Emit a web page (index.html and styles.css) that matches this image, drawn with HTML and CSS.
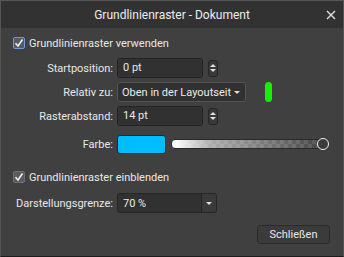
FILE: index.html
```html
<!DOCTYPE html>
<html>
<head>
<meta charset="utf-8">
<title>Grundlinienraster - Dokument</title>
<link rel="stylesheet" href="styles.css">
</head>
<body>
<div class="window">
    <!-- Title bar -->
    <div class="titlebar">
        <span></span>
        <span class="title">Grundlinienraster - Dokument</span>
        <span class="close">
            <svg width="10" height="10" viewBox="0 0 10 10"><path d="M1 1L9 9M9 1L1 9" stroke="#e0e0e0" stroke-width="1.4"/></svg>
        </span>
    </div>

    <!-- Content -->
    <div class="content">
        <div class="check-row first">
            <span class="checkbox focused"><svg width="10" height="10" viewBox="0 0 10 10"><path d="M1.5 5.2L4 8L8.5 1.5" fill="none" stroke="#f0f0f0" stroke-width="1.6"/></svg></span>
            <span>Grundlinienraster verwenden</span>
        </div>

        <div class="row r-start">
            <span class="label">Startposition:</span>
            <span class="input">0 pt</span>
            <span class="spinner"><i class="up"></i><i class="down"></i></span>
        </div>
        <div class="row">
            <span class="label">Relativ zu:</span>
            <span class="select wide"><span class="select-text">Oben in der Layoutseite</span><i class="arrow"></i></span>
            <span class="pill"></span>
        </div>
        <div class="row">
            <span class="label">Rasterabstand:</span>
            <span class="input">14 pt</span>
            <span class="spinner"><i class="up"></i><i class="down"></i></span>
        </div>
        <div class="row r-color">
            <span class="label">Farbe:</span>
            <span class="swatch"></span>
            <span class="slider"><span class="track"></span><span class="knob"></span></span>
        </div>

        <div class="check-row second">
            <span class="checkbox"><svg width="10" height="10" viewBox="0 0 10 10"><path d="M1.5 5.2L4 8L8.5 1.5" fill="none" stroke="#f0f0f0" stroke-width="1.6"/></svg></span>
            <span>Grundlinienraster einblenden</span>
        </div>

        <div class="row r-limit">
            <span class="label">Darstellungsgrenze:</span>
            <span class="select combo"><span class="select-text">70 %</span><span class="combo-btn"><i class="arrow"></i></span></span>
        </div>

        <div class="footer">
            <span class="btn">Schließen</span>
        </div>
    </div>
</div>
</body>
</html>
```

FILE: styles.css
```css
body {
    margin: 0px;
    background: #404040;
    font-family: Roboto, "Open Sans", sans-serif;
    font-size: 11px;
    color: #e8e8e8;
}
.window {
    width: 344px;
    height: 257px;
    box-sizing: border-box;
    border: 1px solid #565656;
    border-bottom-color: #1c1c1c;
    display: flex;
    flex-direction: column;
}
.titlebar {
    height: 27px;
    background: #323232;
    display: grid;
    grid-template-columns: 1fr auto 1fr;
    align-items: center;
}
.title {
    font-size: 12px;
    color: #ececec;
}
.close {
    justify-self: end;
    padding-right: 7px;
    display: flex;
}
.content {
    padding: 0px 12px;
    display: flex;
    flex-direction: column;
}
.check-row {
    display: flex;
    align-items: center;
    gap: 4px;
    height: 12px;
}
.check-row.first {
    margin-top: 9px;
}
.check-row.second {
    margin-top: 17px;
}
.checkbox {
    width: 12px;
    height: 12px;
    box-sizing: border-box;
    border: 1px solid #707070;
    background: #5a5a5a;
    border-radius: 2px;
    display: flex;
    align-items: center;
    justify-content: center;
}
.checkbox.focused {
    border-color: #6f9ad8;
    background: #555a62;
}
.row {
    display: flex;
    align-items: center;
    height: 20px;
    margin-top: 4px;
}
.row.r-start {
    margin-top: 9px;
}
.row.r-color {
    margin-top: 8px;
}
.row.r-limit {
    margin-top: 10px;
}
.label {
    width: 100px;
    text-align: right;
    margin-right: 4px;
    flex-shrink: 0;
    white-space: nowrap;
}
.input {
    width: 86px;
    height: 20px;
    box-sizing: border-box;
    background: #313131;
    border: 1px solid #242424;
    border-radius: 3px;
    padding-left: 5px;
    line-height: 18px;
}
.spinner {
    width: 10px;
    height: 17px;
    box-sizing: border-box;
    margin-left: 5px;
    border: 1px solid #262626;
    background: #393939;
    border-radius: 3px;
    display: flex;
    flex-direction: column;
    align-items: center;
    justify-content: center;
    gap: 2px;
}
.spinner i {
    display: block;
    width: 0;
    height: 0;
    border-left: 3px solid transparent;
    border-right: 3px solid transparent;
}
.spinner .up {
    border-bottom: 3px solid #e0e0e0;
}
.spinner .down {
    border-top: 3px solid #e0e0e0;
}
.select {
    height: 20px;
    box-sizing: border-box;
    background: #313131;
    border: 1px solid #545454;
    border-radius: 3px;
    display: flex;
    align-items: center;
    overflow: hidden;
}
.select.wide {
    width: 129px;
    padding: 0px 5px 0px 4px;
}
.select-text {
    flex: 1;
    white-space: nowrap;
    overflow: hidden;
    color: #eaeaea;
}
.arrow {
    display: block;
    width: 0;
    height: 0;
    margin-left: 3px;
    border-left: 3px solid transparent;
    border-right: 3px solid transparent;
    border-top: 3px solid #e0e0e0;
}
.pill {
    width: 7px;
    height: 20px;
    margin-left: 19px;
    background: #19f000;
    border-radius: 4px;
}
.swatch {
    width: 49px;
    height: 19px;
    box-sizing: border-box;
    background: #00bdfd;
    border: 1px solid #2a2a2a;
    border-radius: 3px;
}
.slider {
    position: relative;
    width: 158px;
    height: 12px;
    margin-left: 5px;
    display: flex;
    align-items: center;
}
.track {
    width: 152px;
    height: 8px;
    border-radius: 4px;
    border: 1px solid #2a2a2a;
    background:
        linear-gradient(to right, #ffffff 2%, rgba(255, 255, 255, 0.55) 25%, rgba(255, 255, 255, 0) 95%),
        repeating-conic-gradient(#5c5c5c 0 25%, #4a4a4a 0 50%) 0 0 / 8px 8px;
}
.knob {
    position: absolute;
    right: 0px;
    top: 0px;
    width: 12px;
    height: 12px;
    box-sizing: border-box;
    border: 1.5px solid #f0f0f0;
    border-radius: 50%;
    background: #3a3a3a;
}
.select.combo {
    width: 100px;
    border-color: #262626;
    padding-left: 5px;
}
.combo-btn {
    width: 14px;
    height: 18px;
    border-left: 1px solid #262626;
    background: #3a3a3a;
    display: flex;
    align-items: center;
    justify-content: center;
}
.combo-btn .arrow {
    margin-left: 0px;
}
.footer {
    display: flex;
    justify-content: flex-end;
    margin-top: 12px;
}
.btn {
    width: 73px;
    height: 19px;
    box-sizing: border-box;
    border: 1px solid #2b2b2b;
    background: #3b3b3b;
    border-radius: 3px;
    text-align: center;
    line-height: 17px;
    margin-right: 1px;
}
```
